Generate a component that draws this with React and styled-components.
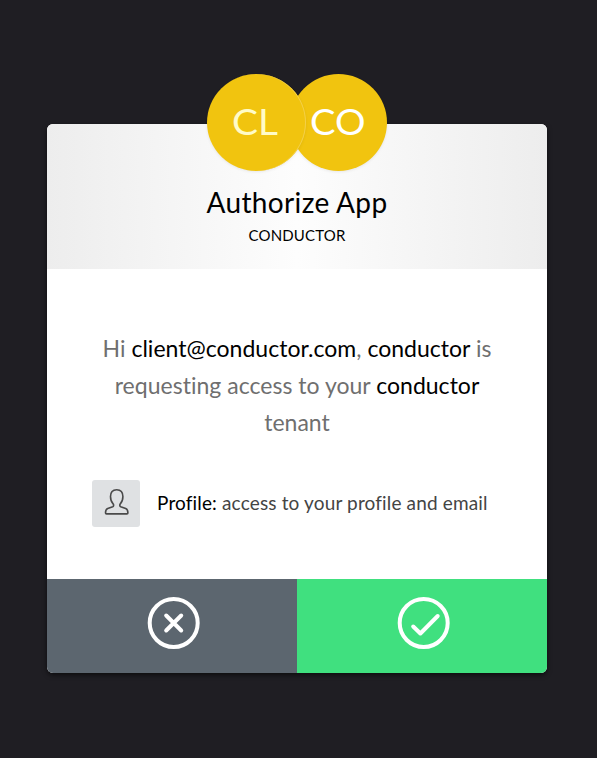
import React from "react";
import styled, { createGlobalStyle } from "styled-components";

const GlobalStyle = createGlobalStyle`
  *, *::before, *::after { box-sizing: border-box; }
  body {
    margin: 0;
    background: #1f1e23;
    font-family: Lato, sans-serif;
    font-variant-ligatures: none;
    color: #000;
  }
`;

const Page = styled.main`
  height: 758px;
  padding: 124px 50px 0 47px;
  overflow: hidden;
`;

const Card = styled.section`
  display: flex;
  flex-direction: column;
  width: 500px;
  height: 549px;
  border-radius: 6px;
  background: #fff;
  box-shadow: 0 2px 5px rgba(0, 0, 0, 0.6);
`;

const Header = styled.header`
  display: flex;
  flex-direction: column;
  align-items: center;
  height: 145px;
  border-radius: 6px 6px 0 0;
  background: linear-gradient(90deg, #ededed 0%, #fdfdfd 50%, #ededed 100%);
`;

const Avatars = styled.div`
  display: flex;
  height: 97px;
  margin-top: -50px;
`;

const Avatar = styled.div`
  display: flex;
  align-items: center;
  justify-content: center;
  flex: none;
  width: ${({ $front }) => ($front ? 99 : 97)}px;
  height: 97px;
  margin-right: ${({ $front }) => ($front ? -16 : 0)}px;
  border-radius: 50%;
  background: #f1c40f;
  box-shadow: ${({ $front }) => ($front ? "inset -1px 0 0 #f3d04a, " : "")}0 1px 3px rgba(0, 0, 0, 0.08);
  z-index: ${({ $front }) => ($front ? 1 : 0)};
`;

const Initials = styled.svg`
  display: block;
  width: 97px;
  height: 97px;
  text {
    font-family: Lato, sans-serif;
    font-size: 37px;
    fill: ${({ $tint }) => $tint};
  }
`;

const Title = styled.h1`
  margin: 13px 0 0;
  font-size: 28px;
  font-weight: 400;
  line-height: 36px;
  letter-spacing: 0.35px;
  white-space: nowrap;
`;

const AppName = styled.div`
  margin-top: 5px;
  font-size: 15px;
  line-height: 20px;
  letter-spacing: 0.15px;
`;

const Content = styled.div`
  flex: 1;
  padding: 61px 45px 0;
`;

const Message = styled.p`
  margin: 0;
  font-size: 23px;
  line-height: 37px;
  letter-spacing: 0.02px;
  color: #6f6f6f;
  text-align: center;
  white-space: nowrap;
`;

const Strong = styled.span`
  color: #000;
`;

const Scope = styled.div`
  display: flex;
  align-items: center;
  gap: 17px;
  height: 47px;
  margin-top: 39px;
  font-size: 19px;
  letter-spacing: 0.15px;
  color: #444;
  white-space: nowrap;
`;

const ScopeText = styled.span`
  padding-bottom: 2px;
`;

const ScopeIcon = styled.div`
  display: flex;
  align-items: center;
  justify-content: center;
  flex: none;
  width: 48px;
  height: 47px;
  border-radius: 3px;
  background: #dfe1e3;
`;

const Actions = styled.footer`
  display: flex;
  height: 94px;
`;

const Action = styled.button`
  display: flex;
  justify-content: center;
  flex: 1;
  padding: 17px 0 0 3px;
  border: 0;
  border-radius: ${({ $allow }) => ($allow ? "0 0 6px 0" : "0 0 0 6px")};
  background: ${({ $allow }) => ($allow ? "#40e07f" : "#5c666f")};
  cursor: pointer;
`;

const Icon = styled.svg`
  display: block;
  fill: none;
  stroke: ${({ $color }) => $color};
  stroke-linecap: round;
  stroke-linejoin: round;
`;

export default function App() {
  return (
    <>
      <GlobalStyle />
      <Page>
        <Card>
          <Header>
            <Avatars>
              <Avatar $front>
                <Initials $tint="#fffbc8" viewBox="0 0 97 97">
                  <text x="24" y="61" textLength="46" lengthAdjust="spacingAndGlyphs">CL</text>
                </Initials>
              </Avatar>
              <Avatar>
                <Initials $tint="#ffffff" viewBox="0 0 97 97">
                  <text x="20" y="61" textLength="55.5" lengthAdjust="spacingAndGlyphs">CO</text>
                </Initials>
              </Avatar>
            </Avatars>
            <Title>Authorize App</Title>
            <AppName>CONDUCTOR</AppName>
          </Header>
          <Content>
            <Message>
              Hi <Strong>client@conductor.com</Strong>, <Strong>conductor</Strong> is
              <br />
              requesting access to your <Strong>conductor</Strong>
              <br />
              tenant
            </Message>
            <Scope>
              <ScopeIcon>
                <Icon $color="#4a4a4a" width="48" height="47" viewBox="0 0 48 47" strokeWidth="1.6">
                  <path d="M24.700 9.700c-4.200 0-6.200 2.900-6.200 6.900 0 2.900.9 5.600 2.600 7.300.7.700.8 2.300-.4 2.800l-5 1.900c-1.500.6-2.200 2.400-2.200 4.400 0 .6.400.9 1 .9h20.400c.6 0 1-.3 1-.9 0-2-.7-3.800-2.200-4.400l-5-1.900c-1.200-.5-1.100-2.100-.4-2.800 1.700-1.700 2.600-4.400 2.600-7.300 0-4-2-6.900-6.200-6.900z" />
                </Icon>
              </ScopeIcon>
              <ScopeText><Strong>Profile:</Strong> access to your profile and email</ScopeText>
            </Scope>
          </Content>
          <Actions>
            <Action aria-label="Deny">
              <Icon $color="#fff" width="54" height="54" viewBox="0 0 54 54" strokeWidth="4">
                <circle cx="26.700" cy="27" r="24" />
                <path d="M19.200 19.500l15 15M34.200 19.500l-15 15" />
              </Icon>
            </Action>
            <Action $allow aria-label="Allow">
              <Icon $color="#fff" width="54" height="54" viewBox="0 0 54 54" strokeWidth="4">
                <circle cx="26.700" cy="27" r="24" />
                <path d="M16.200 30.500l7.200 7L40.700 20" />
              </Icon>
            </Action>
          </Actions>
        </Card>
      </Page>
    </>
  );
}
